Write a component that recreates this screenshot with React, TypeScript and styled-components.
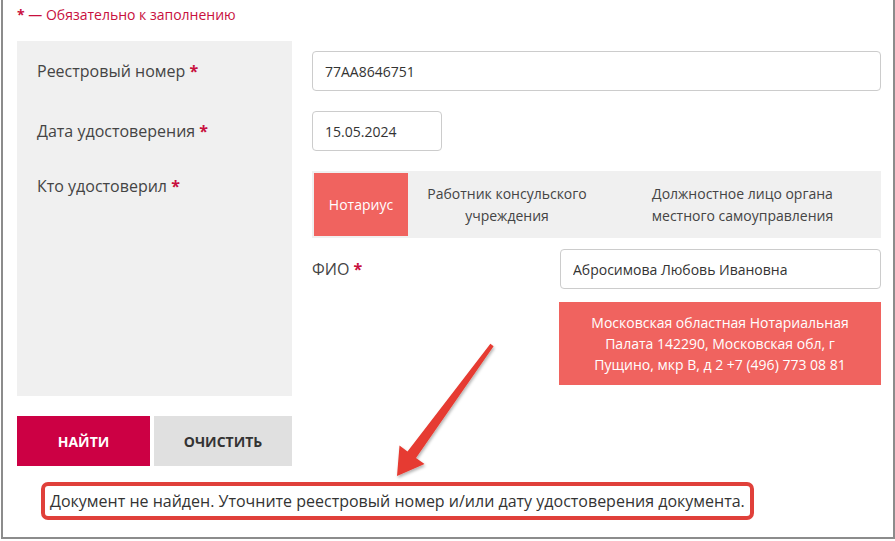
import React, { useState } from "react";
import styled, { createGlobalStyle } from "styled-components";

const GlobalStyle = createGlobalStyle`
  html, body {
    margin: 0;
    padding: 0;
    background: #fff;
  }
  body {
    font-family: "Open Sans", "Liberation Sans", sans-serif;
  }
  * {
    box-sizing: border-box;
  }
`;

const tabs = [
  { id: "notary", lines: ["Нотариус"] },
  { id: "consul", lines: ["Работник консульского", "учреждения"] },
  { id: "local", lines: ["Должностное лицо органа", "местного самоуправления"] },
];

export default function App() {
  const [active, setActive] = useState("notary");
  const [number, setNumber] = useState("77AA8646751");
  const [date, setDate] = useState("15.05.2024");
  const [fio, setFio] = useState("Абросимова Любовь Ивановна");

  return (
    <>
      <GlobalStyle />
      <Frame>
        <RequiredNote>
          <Star>*</Star> — Обязательно к заполнению
        </RequiredNote>

        <FormGrid>
          <Panel />

          <Label $row={1}>
            Реестровый номер <Star>*</Star>
          </Label>
          <Field $row={1}>
            <Input value={number} onChange={(e) => setNumber(e.target.value)} />
          </Field>

          <Label $row={2}>
            Дата удостоверения <Star>*</Star>
          </Label>
          <Field $row={2}>
            <Input
              $width={130}
              value={date}
              onChange={(e) => setDate(e.target.value)}
            />
          </Field>

          <Label $row={3} $top={5}>
            Кто удостоверил <Star>*</Star>
          </Label>
          <Field $row={3}>
            <TabBar>
              {tabs.map((t) => (
                <Tab
                  key={t.id}
                  $active={active === t.id}
                  onClick={() => setActive(t.id)}
                >
                  <span>
                    {t.lines.map((l, i) => (
                      <React.Fragment key={i}>
                        {i > 0 && <br />}
                        {l}
                      </React.Fragment>
                    ))}
                  </span>
                </Tab>
              ))}
            </TabBar>
          </Field>

          <FioBlock>
            <FioRow>
              <FioLabel>
                ФИО <Star>*</Star>
              </FioLabel>
              <Input value={fio} onChange={(e) => setFio(e.target.value)} />
            </FioRow>
            <InfoBox>
              Московская областная Нотариальная Палата 142290, Московская
              обл, г Пущино, мкр В, д 2 +7 (496) 773 08 81
            </InfoBox>
          </FioBlock>
        </FormGrid>

        <ButtonRow>
          <Button $primary>Найти</Button>
          <Button>Очистить</Button>
        </ButtonRow>

        <Message>
          Документ не найден. Уточните реестровый номер и/или дату
          удостоверения документа.
        </Message>

        {/* annotation arrow */}
        <Overlay viewBox="0 0 895 541" width={895} height={541}>
          <defs>
            <filter id="shadow" x="-20%" y="-20%" width="140%" height="140%">
              <feDropShadow
                dx="1"
                dy="2"
                stdDeviation="1.5"
                floodColor="#000"
                floodOpacity="0.3"
              />
            </filter>
          </defs>
          <polygon
            filter="url(#shadow)"
            fill="#e63a30"
            points="490.4,343.8 493.6,346.2 416,458 424.5,464 397,476 399.5,445.5 407.5,451.6"
          />
        </Overlay>
      </Frame>
    </>
  );
}

const Frame = styled.div`
  position: relative;
  margin-left: 1px;
  width: 894px;
  height: 539px;
  border: 2px solid #8c8c8c;
  border-top: none;
  padding: 0 12px 0 14px;
`;

const RequiredNote = styled.div`
  padding-top: 3px;
  margin-bottom: 14px;
  font-size: 14px;
  line-height: 24px;
  color: #c8103e;
`;

const Star = styled.span`
  color: #c8103e;
  font-weight: bold;
`;

const FormGrid = styled.div`
  display: grid;
  grid-template-columns: 275px 1fr;
  grid-template-rows: 60px 60px 77px auto;
  column-gap: 20px;
`;

const Panel = styled.div`
  grid-column: 1;
  grid-row: 1 / -1;
  background: #f0f0f0;
`;

const Label = styled.div<{ $row: number; $top?: number }>`
  grid-column: 1;
  grid-row: ${(p) => p.$row};
  padding: ${(p) => p.$top ?? 10}px 0 0 20px;
  font-size: 16px;
  line-height: 40px;
  color: #444;
`;

const Field = styled.div<{ $row: number }>`
  grid-column: 2;
  grid-row: ${(p) => p.$row};
  padding-top: 10px;
`;

const Input = styled.input<{ $width?: number }>`
  display: block;
  width: ${(p) => (p.$width ? `${p.$width}px` : "100%")};
  height: 40px;
  padding: 0 12px;
  border: 1px solid #cccccc;
  border-radius: 4px;
  font-family: inherit;
  font-size: 14px;
  color: #333;
  background: #fff;
  outline: none;
`;

const TabBar = styled.div`
  display: grid;
  grid-template-columns: 94px 198px 1fr;
  height: 67px;
  padding: 2px;
  background: #f0f0f0;
`;

const Tab = styled.div<{ $active?: boolean }>`
  display: flex;
  align-items: center;
  justify-content: center;
  text-align: center;
  font-size: 14px;
  line-height: 22px;
  white-space: nowrap;
  cursor: pointer;
  color: ${(p) => (p.$active ? "#fff" : "#444")};
  background: ${(p) => (p.$active ? "#f0635f" : "transparent")};
`;

const FioBlock = styled.div`
  grid-column: 2;
  grid-row: 4;
  padding: 11px 0 11px;
`;

const FioRow = styled.div`
  display: grid;
  grid-template-columns: 248px 1fr;
  align-items: center;
`;

const FioLabel = styled.div`
  font-size: 16px;
  line-height: 40px;
  color: #444;
`;

const InfoBox = styled.div`
  margin: 13px 0 0 247px;
  padding: 10px 20px;
  background: #f0635f;
  color: #fff;
  font-size: 14px;
  line-height: 21px;
  text-align: center;
`;

const ButtonRow = styled.div`
  display: flex;
  gap: 4px;
  margin-top: 20px;
`;

const Button = styled.button<{ $primary?: boolean }>`
  width: ${(p) => (p.$primary ? 133 : 138)}px;
  height: 50px;
  border: none;
  font-family: inherit;
  font-size: 14px;
  font-weight: bold;
  text-transform: uppercase;
  cursor: pointer;
  background: ${(p) => (p.$primary ? "#cc0044" : "#e0e0e0")};
  color: ${(p) => (p.$primary ? "#fff" : "#333")};
`;

const Message = styled.div`
  display: inline-block;
  margin: 16px 0 0 24px;
  padding: 2px 5px;
  border: 4px solid #e0403a;
  border-radius: 7px;
  font-size: 16px;
  line-height: 26px;
  color: #333;
`;

const Overlay = styled.svg`
  position: absolute;
  left: -3px;
  top: 0;
  pointer-events: none;
`;
